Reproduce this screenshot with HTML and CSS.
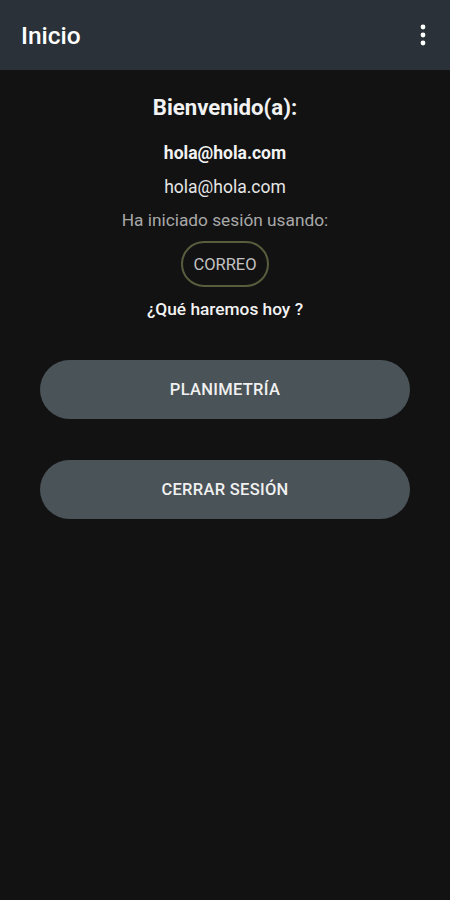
FILE: index.html
```html
<!DOCTYPE html>
<html lang="es">
<head>
<meta charset="utf-8">
<title>Inicio</title>
<link rel="stylesheet" href="styles.css">
</head>
<body>
<header class="appbar">
  <h1 class="title">Inicio</h1>
  <svg class="menu" width="6" height="22" viewBox="0 0 6 22" aria-hidden="true">
    <circle cx="3" cy="3" r="2.4" fill="#fff"/>
    <circle cx="3" cy="11" r="2.4" fill="#fff"/>
    <circle cx="3" cy="19" r="2.4" fill="#fff"/>
  </svg>
</header>
<main class="content">
  <h2 class="welcome">Bienvenido(a):</h2>
  <p class="email-bold">hola@hola.com</p>
  <p class="email">hola@hola.com</p>
  <p class="muted">Ha iniciado sesión usando:</p>
  <span class="chip">CORREO</span>
  <p class="question">¿Qué haremos hoy ?</p>
  <div class="actions">
    <button class="btn">PLANIMETRÍA</button>
    <button class="btn">CERRAR SESIÓN</button>
  </div>
</main>
</body>
</html>
```
FILE: styles.css
```css
html, body {
  margin: 0;
  padding: 0;
  background: #121212;
  font-family: Roboto, "Liberation Sans", sans-serif;
  color: #ffffff;
}
.appbar {
  height: 70px;
  background: #2a3139;
  display: flex;
  align-items: center;
  justify-content: space-between;
  padding: 0 24px 0 21px;
  box-sizing: border-box;
}
.title {
  margin: 2px 0 0;
  font-size: 24.5px;
  font-weight: 500;
  line-height: 30px;
  color: #fff;
}
.menu {
  display: block;
  margin-top: -1px;
}
.content {
  display: flex;
  flex-direction: column;
  align-items: center;
}
.welcome {
  margin: 23px 0 0;
  font-size: 22.2px;
  font-weight: 700;
  line-height: 28px;
  color: #f2f2f2;
}
.email-bold {
  margin: 21px 0 0;
  font-size: 17.5px;
  font-weight: 700;
  line-height: 22px;
  color: #f2f2f2;
}
.email {
  margin: 12px 0 0;
  font-size: 17.5px;
  line-height: 22px;
  color: #e6e6e6;
}
.muted {
  margin: 11px 0 0;
  font-size: 17.3px;
  line-height: 22px;
  color: #a8a8a8;
}
.chip {
  margin-top: 10px;
  width: 88px;
  height: 46px;
  box-sizing: border-box;
  border: 2px solid #595d3d;
  border-radius: 23px;
  display: flex;
  align-items: center;
  justify-content: center;
  font-size: 16.5px;
  color: #c2c2c2;
}
.question {
  margin: 11px 0 0;
  font-size: 17.3px;
  font-weight: 500;
  line-height: 22px;
  color: #f2f2f2;
}
.actions {
  margin-top: 40px;
  width: 370px;
  display: flex;
  flex-direction: column;
  gap: 41px;
}
.btn {
  height: 59px;
  border: none;
  border-radius: 30px;
  background: #4a5357;
  color: #f0f0f0;
  font-family: Roboto, "Liberation Sans", sans-serif;
  font-size: 16.5px;
  font-weight: 500;
  letter-spacing: 0.3px;
}
```
